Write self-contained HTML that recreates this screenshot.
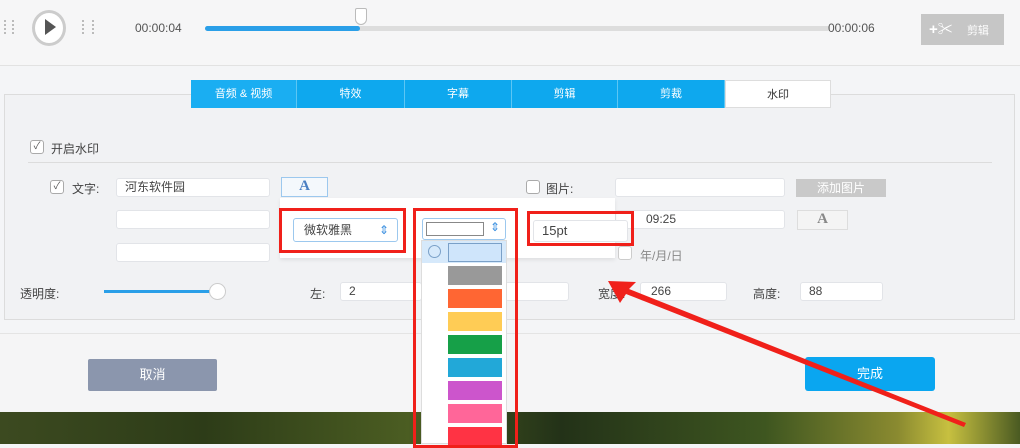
<!DOCTYPE html>
<html><head><meta charset="utf-8"><style>
*{box-sizing:border-box;margin:0;padding:0}
body{width:1020px;height:444px;overflow:hidden;background:#f4f5f7;font-family:"Liberation Sans","Noto Sans CJK SC",sans-serif;font-size:12px;color:#444;position:relative}
.a{position:absolute}
.inp{position:absolute;background:#fff;border:1px solid #e2e4e8;border-radius:3px;height:19px;padding-left:8px;line-height:17px;font-size:12px;color:#444}
.cb{position:absolute;width:14px;height:14px;border:1px solid #aaa;border-radius:3px;background:#fff;font-size:10px;line-height:12px;text-align:center;color:#555}
.tab{position:absolute;top:80px;height:28px;background:#0ea8ee;color:#fff;text-align:center;line-height:28px;font-size:11px;border-right:1px solid #5cc6f4}
.red{position:absolute;border:3px solid #f0201a}
.sw{position:absolute;left:448px;width:54px;height:19px}
</style></head><body>
<div class="a" style="left:0;top:0;width:1020px;height:66px;background:#f6f6f7;border-bottom:1px solid #e2e2e2"></div>
<div class="a" style="left:4px;top:20px;width:10px;height:14px;border-left:2px dotted #bbb;border-right:2px dotted #bbb"></div>
<div class="a" style="left:82px;top:20px;width:12px;height:14px;border-left:2px dotted #bbb;border-right:2px dotted #bbb"></div>
<div class="a" style="left:32px;top:10px;width:34px;height:36px;border-radius:50%;border:3px solid #ccc;background:#fff"></div>
<div class="a" style="left:45px;top:19px;border-left:11px solid #555;border-top:8px solid transparent;border-bottom:8px solid transparent"></div>
<div class="a" style="left:135px;top:21px;color:#555">00:00:04</div>
<div class="a" style="left:205px;top:26px;width:625px;height:5px;background:#ddd;border-radius:3px"></div>
<div class="a" style="left:205px;top:26px;width:155px;height:5px;background:#2a9fe8;border-radius:3px"></div>
<div class="a" style="left:355px;top:8px;width:12px;height:17px;background:#fff;border:1px solid #bbb;border-radius:2px 2px 6px 6px"></div>
<div class="a" style="left:828px;top:21px;color:#555">00:00:06</div>
<div class="a" style="left:921px;top:14px;width:83px;height:31px;background:#c6c6c6;color:#fff;line-height:31px;padding-left:8px;font-size:15px;font-weight:bold">+✂ <span style="font-size:11px;font-weight:normal;margin-left:10px">剪辑</span></div>
<div class="a" style="left:4px;top:94px;width:1011px;height:226px;background:#f1f2f4;border:1px solid #dcdcdc"></div>
<div class="tab" style="left:191px;width:106px;background:#1aaef2">音频 &amp; 视频</div>
<div class="tab" style="left:297px;width:108px">特效</div>
<div class="tab" style="left:405px;width:107px">字幕</div>
<div class="tab" style="left:512px;width:106px">剪辑</div>
<div class="tab" style="left:618px;width:107px">剪裁</div>
<div class="tab" style="left:725px;width:106px;background:#fff;color:#333;border:1px solid #ddd">水印</div>
<div class="cb" style="left:30px;top:140px">✓</div><div class="a" style="left:51px;top:140px">开启水印</div>
<div class="a" style="left:28px;top:162px;width:964px;height:1px;background:#dcdcdc"></div>
<div class="cb" style="left:50px;top:180px">✓</div><div class="a" style="left:72px;top:180px">文字:</div>
<div class="inp" style="left:116px;top:178px;width:154px">河东软件园</div>
<div class="a" style="left:281px;top:177px;width:47px;height:20px;border:1px solid #9cc8ee;background:#f4f8fc;text-align:center;font:bold 15px 'Liberation Serif';color:#4b7fc2">A</div>
<div class="inp" style="left:116px;top:210px;width:154px"></div>
<div class="inp" style="left:116px;top:243px;width:154px"></div>
<div class="cb" style="left:526px;top:180px"></div><div class="a" style="left:546px;top:180px">图片:</div>
<div class="inp" style="left:615px;top:178px;width:170px"></div>
<div class="a" style="left:796px;top:179px;width:90px;height:18px;background:#c9c9c9;color:#fff;text-align:center;line-height:18px">添加图片</div>
<div class="inp" style="left:615px;top:210px;width:170px;padding-left:30px">09:25</div>
<div class="a" style="left:797px;top:210px;width:51px;height:20px;border:1px solid #ddd;background:#f4f4f4;text-align:center;font:bold 15px 'Liberation Serif';color:#888">A</div>
<div class="cb" style="left:618px;top:246px;border-color:#ccc"></div><div class="a" style="left:640px;top:247px;color:#888">年/月/日</div>
<div class="a" style="left:20px;top:285px">透明度:</div>
<div class="a" style="left:104px;top:290px;width:112px;height:3px;background:#2a9fe8"></div>
<div class="a" style="left:209px;top:283px;width:17px;height:17px;border-radius:50%;background:#fff;border:1px solid #ccc"></div>
<div class="a" style="left:310px;top:285px">左:</div>
<div class="inp" style="left:340px;top:282px;width:82px">2</div>
<div class="inp" style="left:505px;top:282px;width:64px"></div>
<div class="a" style="left:598px;top:285px">宽度:</div>
<div class="inp" style="left:640px;top:282px;width:87px;padding-left:10px">266</div>
<div class="a" style="left:753px;top:285px">高度:</div>
<div class="inp" style="left:800px;top:282px;width:83px">88</div>
<div class="a" style="left:0;top:333px;width:1020px;height:80px;background:#f5f5f6;border-top:1px solid #e4e4e4"></div>
<div class="a" style="left:88px;top:359px;width:129px;height:32px;background:#8b96ad;color:#fff;text-align:center;line-height:32px;font-size:13px;border-radius:2px">取消</div>
<div class="a" style="left:805px;top:357px;width:130px;height:34px;background:#0aa6f0;color:#fff;text-align:center;line-height:34px;font-size:13px;border-radius:3px">完成</div>
<div class="a" style="left:0;top:412px;width:1020px;height:32px;background:linear-gradient(90deg,#3c4a20,#2d3c18 20%,#4b5d22 40%,#233218 55%,#3e5620 75%,#8a8a30 88%,#c7c040 93%,#4a5a22)"></div>
<div class="a" style="left:280px;top:198px;width:335px;height:60px;background:#fff;box-shadow:0 2px 4px rgba(0,0,0,.08)"></div>
<div class="a" style="left:293px;top:218px;width:105px;height:24px;border:1px solid #9cc8ee;border-radius:3px;background:#fff;padding-left:10px;line-height:22px;font-size:12px">微软雅黑<span style="position:absolute;right:8px;color:#3a8fe0">⇕</span></div>
<div class="a" style="left:421px;top:240px;width:86px;height:204px;background:#fff;border:1px solid #ddd"></div>
<div class="a" style="left:422px;top:218px;width:84px;height:22px;border:1px solid #9cc8ee;border-radius:3px;background:#fff"></div>
<div class="a" style="left:426px;top:222px;width:58px;height:14px;border:1px solid #888"></div>
<div class="a" style="left:490px;top:220px;color:#3a8fe0;font-size:12px">⇕</div>
<div class="a" style="left:422px;top:241px;width:84px;height:22px;background:#d6e9fb"></div>
<div class="a" style="left:428px;top:245px;width:13px;height:13px;border-radius:50%;border:1px solid #7aa0c8"></div>
<div class="sw" style="top:243px;background:#cfe5fb;border:1px solid #7aa0c8"></div>
<div class="sw" style="top:266px;background:#999"></div>
<div class="sw" style="top:289px;background:#ff6633"></div>
<div class="sw" style="top:312px;background:#ffcc55"></div>
<div class="sw" style="top:335px;background:#16a048"></div>
<div class="sw" style="top:358px;background:#22a8d8"></div>
<div class="sw" style="top:381px;background:#cc55cc"></div>
<div class="sw" style="top:404px;background:#ff6699"></div>
<div class="sw" style="top:427px;background:#ff3344"></div>
<div class="inp" style="left:533px;top:220px;width:95px;height:22px;line-height:20px;font-size:13px">15pt</div>
<div class="red" style="left:279px;top:208px;width:127px;height:45px"></div>
<div class="red" style="left:413px;top:208px;width:105px;height:240px"></div>
<div class="red" style="left:527px;top:211px;width:107px;height:35px"></div>
<svg class="a" style="left:0;top:0" width="1020" height="444"><polygon points="608,281 636,282 629,289 966,423 964,427 626,294 620,303" fill="#f0201a"/></svg>
</body></html>
